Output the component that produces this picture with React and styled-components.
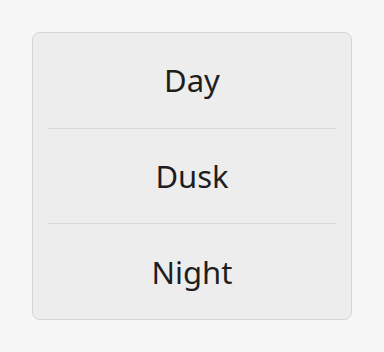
import React from 'react'
import styled, { createGlobalStyle } from 'styled-components'

const GlobalStyle = createGlobalStyle`
    html, body {
        margin: 0;
        background: #f6f6f6;
    }
`

const Page = styled.div`
    padding: 32px;
    font-family: "Noto Sans", "Open Sans", sans-serif;
`

const Menu = styled.div`
    box-sizing: border-box;
    width: 320px;
    height: 288px;
    display: flex;
    flex-direction: column;
    background: #ededed;
    border: 1px solid #d4d4d4;
    border-radius: 8px;
`

const Item = styled.div`
    flex: 1;
    display: flex;
    align-items: center;
    justify-content: center;
    font-size: 31px;
    color: #1e1e1e;
`

const Divider = styled.div`
    height: 1px;
    margin: 0 15px;
    background: #d9d9d9;
`

const items = ['Day', 'Dusk', 'Night']

const App = () => (
    <>
        <GlobalStyle />
        <Page>
            <Menu>
                {items.map((label, i) => (
                    <React.Fragment key={label}>
                        {i > 0 && <Divider />}
                        <Item>{label}</Item>
                    </React.Fragment>
                ))}
            </Menu>
        </Page>
    </>
)

export default App
